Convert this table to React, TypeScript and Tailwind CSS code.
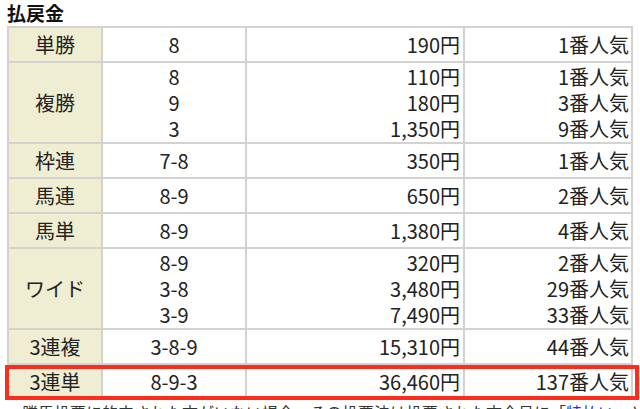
import * as React from 'react';

type Row = {
  label: string;
  items: { combo: string; pay: string; pop: string }[];
};

const rows: Row[] = [
  { label: '単勝', items: [{ combo: '8', pay: '190円', pop: '1番人気' }] },
  {
    label: '複勝',
    items: [
      { combo: '8', pay: '110円', pop: '1番人気' },
      { combo: '9', pay: '180円', pop: '3番人気' },
      { combo: '3', pay: '1,350円', pop: '9番人気' },
    ],
  },
  { label: '枠連', items: [{ combo: '7-8', pay: '350円', pop: '1番人気' }] },
  { label: '馬連', items: [{ combo: '8-9', pay: '650円', pop: '2番人気' }] },
  { label: '馬単', items: [{ combo: '8-9', pay: '1,380円', pop: '4番人気' }] },
  {
    label: 'ワイド',
    items: [
      { combo: '8-9', pay: '320円', pop: '2番人気' },
      { combo: '3-8', pay: '3,480円', pop: '29番人気' },
      { combo: '3-9', pay: '7,490円', pop: '33番人気' },
    ],
  },
  { label: '3連複', items: [{ combo: '3-8-9', pay: '15,310円', pop: '44番人気' }] },
  { label: '3連単', items: [{ combo: '8-9-3', pay: '36,460円', pop: '137番人気' }] },
];

const App = () => {
  return (
    <div
      className="relative w-[640px] h-[409px] overflow-hidden bg-white text-[#222]"
      style={{ fontFamily: '"Noto Sans CJK JP", "Noto Sans", sans-serif' }}
    >
      <h2 className="pl-[7px] text-[19px] font-bold leading-[26px] text-[#111]">払戻金</h2>

      <table className="ml-[7px] w-[624px] border-collapse border-2 border-[#d2d2d2] text-[20px] leading-[26px] table-fixed">
        <colgroup>
          <col className="w-[94px]" />
          <col className="w-[144px]" />
          <col className="w-[218px]" />
          <col className="w-[168px]" />
        </colgroup>
        <tbody>
          {rows.map((r) => (
            <tr key={r.label} className={r.items.length > 1 ? 'h-[81px]' : 'h-[35px]'}>
              <th className="border-2 border-[#d2d2d2] bg-[#efedd2] font-normal text-center">
                {r.label}
              </th>
              <td className="border-2 border-[#d2d2d2] text-center">
                {r.items.map((i, k) => (
                  <div key={k}>{i.combo}</div>
                ))}
              </td>
              <td className="border-2 border-[#d2d2d2] text-right pr-[3px]">
                {r.items.map((i, k) => (
                  <div key={k}>{i.pay}</div>
                ))}
              </td>
              <td className="border-2 border-[#d2d2d2] text-right pr-[2px]">
                {r.items.map((i, k) => (
                  <div key={k}>{i.pop}</div>
                ))}
              </td>
            </tr>
          ))}
        </tbody>
      </table>

      <p className="pl-[22px] pt-[2px] text-[16px] leading-[20px] whitespace-nowrap text-[#333]">
        勝馬投票に的中された方がいない場合、その投票法は投票された方全員に「
        <span className="text-[#2233ee]">特払い</span>」として
      </p>

      {/* highlight for 3連単 */}
      <div className="absolute left-[5px] top-[365px] w-[634px] h-[35px] border-[4px] border-[#ff2c1c]" />
    </div>
  );
};

export default App;
